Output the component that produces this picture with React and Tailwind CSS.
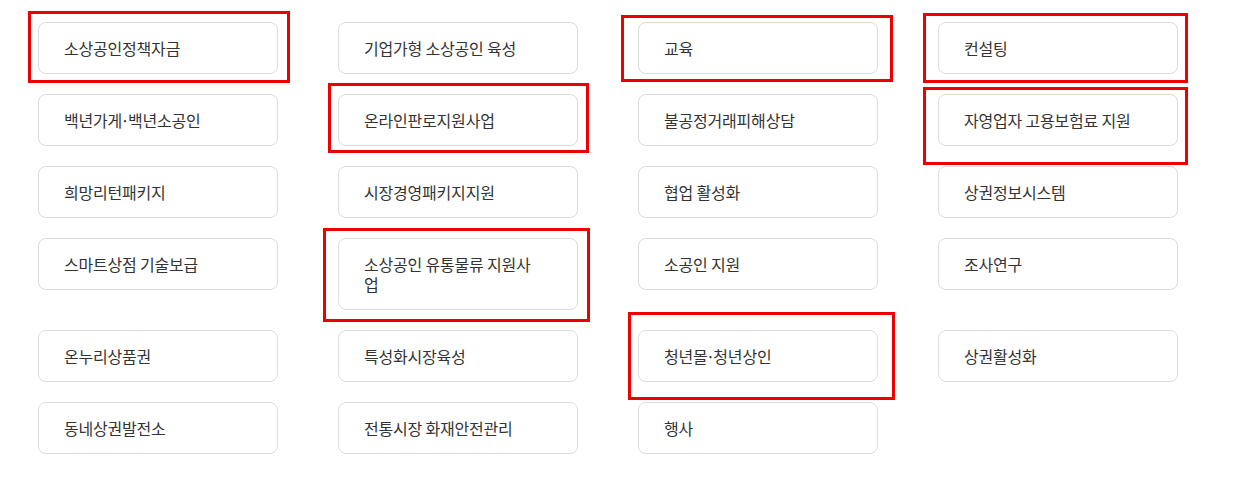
const cols = [
  ["소상공인정책자금", "기업가형 소상공인 육성", "교육", "컨설팅"],
  ["백년가게·백년소공인", "온라인판로지원사업", "불공정거래피해상담", "자영업자 고용보험료 지원"],
  ["희망리턴패키지", "시장경영패키지지원", "협업 활성화", "상권정보시스템"],
  ["스마트상점 기술보급", "소상공인 유통물류 지원사업", "소공인 지원", "조사연구"],
  ["온누리상품권", "특성화시장육성", "청년몰·청년상인", "상권활성화"],
  ["동네상권발전소", "전통시장 화재안전관리", "행사", null],
];

const highlights = [
  "left-[28px] top-[11px] w-[262px] h-[72px]",
  "left-[328px] top-[83px] w-[261px] h-[70px]",
  "left-[621px] top-[15px] w-[272px] h-[67px]",
  "left-[923px] top-[13px] w-[265px] h-[70px]",
  "left-[923px] top-[87px] w-[265px] h-[78px]",
  "left-[323px] top-[228px] w-[267px] h-[94px]",
  "left-[628px] top-[312px] w-[267px] h-[88px]",
];

function Label({ text }) {
  const parts = text.split("·");
  return (
    <>
      {parts.map((p, i) => (
        <span key={i}>
          {i > 0 && <span className="-mx-[1.5px]">·</span>}
          {p}
        </span>
      ))}
    </>
  );
}

export default function App() {
  return (
    <div className="relative w-[1246px] h-[488px] bg-white overflow-hidden font-['Noto_Sans_CJK_KR','Noto_Sans',sans-serif]">
      <div className="grid grid-cols-[repeat(4,240px)] gap-x-[60px] gap-y-5 items-start pl-[38px] pt-[22px]">
        {cols.flat().map((label, i) =>
          label ? (
            <div
              key={i}
              className="border border-[#dcdcdc] rounded-lg pl-[25px] pr-[36px] py-[15px] text-[16px] leading-5 text-[#333333] tracking-[-0.2px]"
            >
              <Label text={label} />
            </div>
          ) : (
            <div key={i} />
          )
        )}
      </div>
      {highlights.map((cls, i) => (
        <div
          key={i}
          className={`absolute border-[3px] border-[#ee0000] pointer-events-none ${cls}`}
        />
      ))}
    </div>
  );
}
